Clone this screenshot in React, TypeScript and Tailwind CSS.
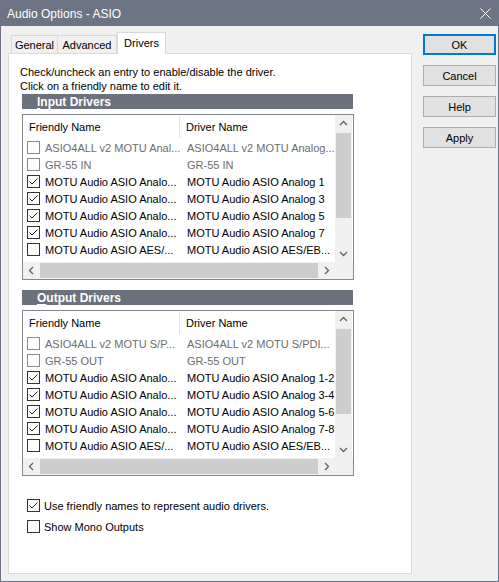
import React from 'react';

interface DriverRow {
  friendly: string;
  driver: string;
  checked: boolean;
  disabled?: boolean;
}

const inputDrivers: DriverRow[] = [
  { friendly: 'ASIO4ALL v2 MOTU Anal...', driver: 'ASIO4ALL v2 MOTU Analog...', checked: false, disabled: true },
  { friendly: 'GR-55 IN', driver: 'GR-55 IN', checked: false, disabled: true },
  { friendly: 'MOTU Audio ASIO Analo...', driver: 'MOTU Audio ASIO Analog 1', checked: true },
  { friendly: 'MOTU Audio ASIO Analo...', driver: 'MOTU Audio ASIO Analog 3', checked: true },
  { friendly: 'MOTU Audio ASIO Analo...', driver: 'MOTU Audio ASIO Analog 5', checked: true },
  { friendly: 'MOTU Audio ASIO Analo...', driver: 'MOTU Audio ASIO Analog 7', checked: true },
  { friendly: 'MOTU Audio ASIO AES/...', driver: 'MOTU Audio ASIO AES/EB...', checked: false },
];

const outputDrivers: DriverRow[] = [
  { friendly: 'ASIO4ALL v2 MOTU S/P...', driver: 'ASIO4ALL v2 MOTU S/PDI...', checked: false, disabled: true },
  { friendly: 'GR-55 OUT', driver: 'GR-55 OUT', checked: false, disabled: true },
  { friendly: 'MOTU Audio ASIO Analo...', driver: 'MOTU Audio ASIO Analog 1-2', checked: true },
  { friendly: 'MOTU Audio ASIO Analo...', driver: 'MOTU Audio ASIO Analog 3-4', checked: true },
  { friendly: 'MOTU Audio ASIO Analo...', driver: 'MOTU Audio ASIO Analog 5-6', checked: true },
  { friendly: 'MOTU Audio ASIO Analo...', driver: 'MOTU Audio ASIO Analog 7-8', checked: true },
  { friendly: 'MOTU Audio ASIO AES/...', driver: 'MOTU Audio ASIO AES/EB...', checked: false },
];

const CheckBox = ({ checked, dim }: { checked: boolean; dim?: boolean }) => (
  <span
    className={`w-[13px] h-[13px] shrink-0 bg-white border flex items-center justify-center ${
      dim ? 'border-[#8a8a8a]' : 'border-[#333333]'
    }`}
  >
    {checked ? (
      <svg width="11" height="11" viewBox="0 0 11 11">
        <polyline points="1.5,5.5 4,8 9.5,2.5" fill="none" stroke="#222" strokeWidth="1" />
      </svg>
    ) : null}
  </span>
);

// small scroll arrow chevron
const Chevron = ({ dir }: { dir: 'up' | 'down' | 'left' | 'right' }) => {
  const pts = {
    up: '1,6 4.5,2.5 8,6',
    down: '1,3 4.5,6.5 8,3',
    left: '6,1 2.5,4.5 6,8',
    right: '3,1 6.5,4.5 3,8',
  }[dir];
  return (
    <svg width="9" height="9" viewBox="0 0 9 9">
      <polyline points={pts} fill="none" stroke="#606060" strokeWidth="1.3" />
    </svg>
  );
};

const SectionBar = ({ first, rest }: { first: string; rest: string }) => (
  <div className="ml-[13px] w-[331px] h-[15px] bg-[#6c717e] flex items-center pl-[15px] text-white text-[12px] font-bold leading-none">
    <span className="underline underline-offset-[2px]">{first}</span>
    <span>{rest}</span>
  </div>
);

const DriverList = ({ rows }: { rows: DriverRow[] }) => (
  <div className="ml-[13px] w-[332px] h-[166px] border border-[#828790] flex flex-col bg-white">
    <div className="flex h-[147px]">
      <div className="w-[312px] overflow-hidden">
        <div className="flex h-[24px] items-center">
          <div className="w-[157px] pl-[6px] border-r border-[#e5e5e5] h-[22px] flex items-center">
            Friendly Name
          </div>
          <div className="pl-[6px]">Driver Name</div>
        </div>
        {rows.map((r, i) => (
          <div
            key={i}
            className={`flex h-[17px] items-center ${r.disabled ? 'text-[#6d6d6d]' : 'text-black'}`}
          >
            <div className="w-[158px] flex items-center pl-[4px] gap-[5px]">
              <CheckBox checked={r.checked} dim={r.disabled} />
              <span className="whitespace-nowrap">{r.friendly}</span>
            </div>
            <div className="pl-[6px] whitespace-nowrap">{r.driver}</div>
          </div>
        ))}
      </div>
      <div className="w-[17px] bg-[#f0f0f0] flex flex-col">
        <div className="h-[17px] flex items-center justify-center">
          <Chevron dir="up" />
        </div>
        <div className="mx-px mt-px h-[85px] bg-[#cdcdcd]" />
        <div className="flex-1" />
        <div className="h-[17px] flex items-center justify-center">
          <Chevron dir="down" />
        </div>
      </div>
    </div>
    <div className="flex h-[17px]">
      <div className="w-[312px] bg-[#f0f0f0] flex items-center">
        <div className="w-[17px] h-[17px] flex items-center justify-center">
          <Chevron dir="left" />
        </div>
        <div className="flex-1 h-[15px] bg-[#cdcdcd]" />
        <div className="w-[17px] h-[17px] flex items-center justify-center">
          <Chevron dir="right" />
        </div>
      </div>
      <div className="w-[18px] bg-[#f0f0f0]" />
    </div>
  </div>
);

const Button = ({ label, primary }: { label: string; primary?: boolean }) => (
  <div
    className={`w-[73px] h-[21px] bg-[#e1e1e1] flex items-center justify-center ${
      primary ? 'border-2 border-[#0078d7]' : 'border border-[#adadad]'
    }`}
  >
    {label}
  </div>
);

export default function App() {
  return (
    <div className="w-[499px] h-[582px] bg-[#f0f0f0] border border-[#6b7384] flex flex-col text-[11px] leading-[14px] text-black font-['Liberation_Sans',Arial,sans-serif] overflow-hidden">
      {/* title bar */}
      <div className="h-[25px] shrink-0 bg-[#6b7384] flex items-center justify-between pl-[6px] pr-[7px] text-white text-[12px]">
        <span>Audio Options - ASIO</span>
        <svg width="11" height="11" viewBox="0 0 11 11">
          <path d="M0.5 0.5 L10.5 10.5 M10.5 0.5 L0.5 10.5" stroke="#ffffff" strokeWidth="1" />
        </svg>
      </div>

      <div className="flex flex-1 pt-[7px]">
        {/* tabs + panel */}
        <div className="ml-[7px] w-[404px] flex flex-col">
          <div className="h-[20px] flex items-end pl-[3px]">
            <div className="w-[47px] h-[18px] border border-b-0 border-[#d9d9d9] flex items-center justify-center">
              General
            </div>
            <div className="w-[59px] h-[18px] border border-b-0 border-l-0 border-[#d9d9d9] flex items-center justify-center">
              Advanced
            </div>
            <div className="w-[49px] h-[22px] -mb-px relative z-10 bg-white border border-b-0 border-[#d9d9d9] flex items-center justify-center pb-[2px]">
              Drivers
            </div>
          </div>
          <div className="h-[521px] bg-white border border-[#d9d9d9] flex flex-col pt-[11px]">
            <div className="pl-[11px]">
              <div>Check/uncheck an entry to enable/disable the driver.</div>
              <div>Click on a friendly name to edit it.</div>
            </div>
            <div className="mt-[1px]">
              <SectionBar first="I" rest="nput Drivers" />
            </div>
            <div className="mt-[5px]">
              <DriverList rows={inputDrivers} />
            </div>
            <div className="mt-[10px]">
              <SectionBar first="O" rest="utput Drivers" />
            </div>
            <div className="mt-[5px]">
              <DriverList rows={outputDrivers} />
            </div>
            <div className="mt-[19px] pl-[18px] flex flex-col">
              <div className="h-[21px] flex items-center gap-[4px]">
                <CheckBox checked />
                <span>Use friendly names to represent audio drivers.</span>
              </div>
              <div className="h-[21px] flex items-center gap-[4px]">
                <CheckBox checked={false} />
                <span>Show Mono Outputs</span>
              </div>
            </div>
          </div>
        </div>

        {/* buttons */}
        <div className="ml-[11px] pt-[1px] flex flex-col gap-[10px]">
          <Button label="OK" primary />
          <Button label="Cancel" />
          <Button label="Help" />
          <Button label="Apply" />
        </div>
      </div>
    </div>
  );
}
